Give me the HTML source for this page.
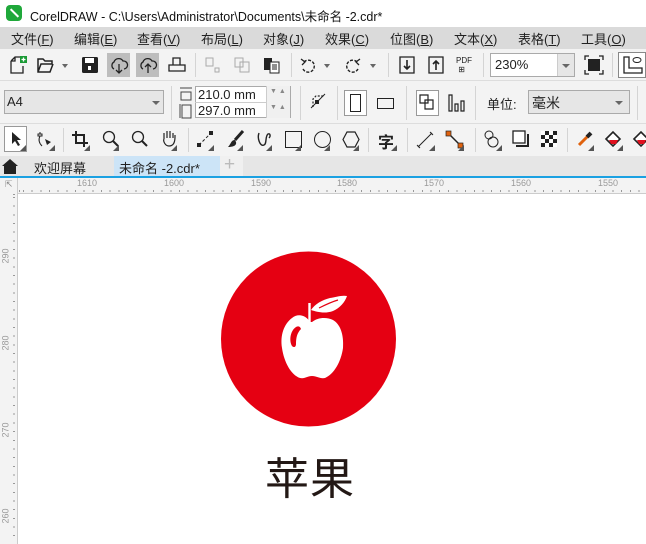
<!DOCTYPE html>
<html><head><meta charset="utf-8"><style>
*{margin:0;padding:0;box-sizing:border-box}
body{width:646px;height:544px;overflow:hidden;background:#fff;font-family:"Liberation Sans","Noto Sans CJK SC",sans-serif;position:relative;font-size:12px;color:#222}
.a{position:absolute}
.t{position:absolute;white-space:nowrap}
svg{position:absolute;overflow:visible}
.sep{position:absolute;width:1px;background:#d4d4d4}
.tri{position:absolute;width:0;height:0;border-left:3px solid transparent;border-top:3px solid transparent;border-right:3px solid #555;border-bottom:3px solid #555}
.rl{position:absolute;left:-2px;font-size:9px;color:#999;transform:rotate(-90deg);white-space:nowrap}
</style></head><body>
<div class="a" style="left:0;top:0;width:646px;height:27px;background:#fff"></div>
<div class="a" style="left:6px;top:5px;width:16px;height:16px;border-radius:4px;background:#1fa83a"></div>
<div class="a" style="left:9px;top:12px;width:11px;height:2px;background:#fff;transform:rotate(45deg)"></div>
<div class="t" style="left:30px;top:6px;font-size:12.5px;color:#111">CorelDRAW - C:\Users\Administrator\Documents\未命名 -2.cdr*</div>
<div class="a" style="left:0;top:27px;width:646px;height:22px;background:#dadada"></div>
<div class="t" style="left:11px;top:29px;font-size:13px">文件(<u>F</u>)</div>
<div class="t" style="left:74px;top:29px;font-size:13px">编辑(<u>E</u>)</div>
<div class="t" style="left:137px;top:29px;font-size:13px">查看(<u>V</u>)</div>
<div class="t" style="left:201px;top:29px;font-size:13px">布局(<u>L</u>)</div>
<div class="t" style="left:263px;top:29px;font-size:13px">对象(<u>J</u>)</div>
<div class="t" style="left:325px;top:29px;font-size:13px">效果(<u>C</u>)</div>
<div class="t" style="left:390px;top:29px;font-size:13px">位图(<u>B</u>)</div>
<div class="t" style="left:454px;top:29px;font-size:13px">文本(<u>X</u>)</div>
<div class="t" style="left:518px;top:29px;font-size:13px">表格(<u>T</u>)</div>
<div class="t" style="left:581px;top:29px;font-size:13px">工具(<u>O</u>)</div>
<div class="a" style="left:0;top:49px;width:646px;height:32px;background:#f3f3f3;border-bottom:1px solid #ddd"></div>
<svg style="left:8px;top:56px" width="18" height="18"><path d="M3 5 L7 1 H12 M3 5 V17 H15 V10 M3 5 H7 V1" fill="none" stroke="#222" stroke-width="1.3"/><rect x="12" y="0" width="7" height="7" fill="#1a9a35"/><path d="M15.5 1.5v4M13.5 3.5h4" stroke="#fff" stroke-width="1.3"/></svg>
<svg style="left:37px;top:58px" width="18" height="15"><path d="M1 1H6L8 3H15V6H4L1 14Z M1 1V14H13L16 6" fill="none" stroke="#222" stroke-width="1.5"/></svg>
<div class="a" style="left:62px;top:64px;border-left:3px solid transparent;border-right:3px solid transparent;border-top:4px solid #666"></div>
<svg style="left:82px;top:57px" width="16" height="16"><rect x="0" y="0" width="16" height="16" rx="1.5" fill="#222"/><rect x="3" y="1" width="9" height="5" fill="#fff"/><rect x="6" y="9" width="3" height="4" fill="#fff"/></svg>
<div class="a" style="left:107px;top:53px;width:23px;height:24px;background:#bdbdbd"></div>
<div class="a" style="left:136px;top:53px;width:23px;height:24px;background:#bdbdbd"></div>
<svg style="left:110px;top:57px" width="18" height="18"><path d="M4 12 A4 4 0 0 1 4 5 A5 5 0 0 1 13 4 A4 4 0 0 1 14 12 M9 7 V16 M6 13 L9 16 L12 13" fill="none" stroke="#222" stroke-width="1.3"/></svg>
<svg style="left:139px;top:57px" width="18" height="18"><path d="M4 12 A4 4 0 0 1 4 5 A5 5 0 0 1 13 4 A4 4 0 0 1 14 12 M9 16 V7 M6 10 L9 7 L12 10" fill="none" stroke="#222" stroke-width="1.3"/></svg>
<svg style="left:168px;top:57px" width="18" height="16"><path d="M5 8 V1 H12 V8 M1 8 H17 V14 H1 Z" fill="none" stroke="#222" stroke-width="1.3"/></svg>
<div class="sep" style="left:195px;top:53px;height:24px"></div>
<svg style="left:205px;top:57px" width="16" height="16"><path d="M1 1H8V9H1Z M10 11H14V15H10Z" fill="none" stroke="#aaa"/></svg>
<svg style="left:234px;top:57px" width="18" height="16"><path d="M1 1H9V10H1Z M6 5H15V15H6Z" fill="#f3f3f3" stroke="#aaa"/></svg>
<svg style="left:263px;top:56px" width="18" height="18"><rect x="1" y="2" width="8" height="12" fill="#222"/><rect x="7" y="6" width="9" height="11" fill="#fff" stroke="#222"/><path d="M9 9h5M9 11h5M9 13h5" stroke="#222"/></svg>
<div class="sep" style="left:291px;top:53px;height:24px"></div>
<svg style="left:300px;top:58px" width="16" height="16"><path d="M4 4 A6 6 0 1 1 3 11" fill="none" stroke="#222" stroke-width="1.4" stroke-dasharray="3 1.5"/><path d="M1 1 L5 4 L2 7" fill="none" stroke="#222" stroke-width="1.3"/></svg>
<div class="a" style="left:324px;top:64px;border-left:3px solid transparent;border-right:3px solid transparent;border-top:4px solid #666"></div>
<svg style="left:345px;top:58px" width="16" height="16"><path d="M12 4 A6 6 0 1 0 13 11" fill="none" stroke="#222" stroke-width="1.4" stroke-dasharray="3 1.5"/><path d="M15 1 L11 4 L14 7" fill="none" stroke="#222" stroke-width="1.3"/></svg>
<div class="a" style="left:370px;top:64px;border-left:3px solid transparent;border-right:3px solid transparent;border-top:4px solid #666"></div>
<div class="sep" style="left:388px;top:53px;height:24px"></div>
<svg style="left:399px;top:56px" width="16" height="18"><path d="M1 1H15V17H1Z" fill="none" stroke="#222" stroke-width="1.3"/><path d="M8 4V13M5 10L8 13L11 10" fill="none" stroke="#222" stroke-width="1.6"/></svg>
<svg style="left:428px;top:56px" width="16" height="18"><path d="M1 1H15V17H1Z" fill="none" stroke="#222" stroke-width="1.3"/><path d="M8 14V5M5 8L8 5L11 8" fill="none" stroke="#222" stroke-width="1.6"/></svg>
<div class="t" style="left:456px;top:56px;font-size:8px;line-height:9px">PDF<br>&nbsp;⊞</div>
<div class="sep" style="left:483px;top:53px;height:24px"></div>
<div class="a" style="left:490px;top:53px;width:85px;height:24px;border:1px solid #aaa;background:#fff"></div>
<div class="a" style="left:557px;top:54px;width:17px;height:22px;background:#e6e6e6;border-left:1px solid #ccc"></div>
<div class="a" style="left:562px;top:64px;border-left:4px solid transparent;border-right:4px solid transparent;border-top:4px solid #666"></div>
<div class="t" style="left:495px;top:57px;font-size:13px">230%</div>
<svg style="left:585px;top:56px" width="18" height="18"><rect x="3" y="3" width="12" height="12" fill="#222"/><path d="M0 4V0H4M14 0H18V4M18 14V18H14M4 18H0V14" fill="none" stroke="#222" stroke-width="1.3"/></svg>
<div class="sep" style="left:612px;top:53px;height:24px"></div>
<div class="a" style="left:618px;top:52px;width:28px;height:26px;border:1px solid #888;background:#fff"></div>
<svg style="left:623px;top:56px" width="20" height="18"><path d="M1 1V17H19V12H6V1Z" fill="none" stroke="#222" stroke-width="1.3"/><ellipse cx="14" cy="4" rx="4" ry="2.5" fill="none" stroke="#222"/></svg>
<div class="a" style="left:0;top:81px;width:646px;height:43px;background:#f3f3f3;border-bottom:1px solid #ddd"></div>
<div class="a" style="left:4px;top:90px;width:160px;height:24px;border:1px solid #aaa;background:#e6e6e6"></div>
<div class="t" style="left:7px;top:94px;font-size:13px">A4</div>
<div class="a" style="left:152px;top:101px;border-left:4px solid transparent;border-right:4px solid transparent;border-top:4px solid #666"></div>
<div class="sep" style="left:171px;top:86px;height:34px"></div>
<svg style="left:179px;top:87px" width="14" height="32"><path d="M1 1H13M2 5H12V13H2Z M3 18H12V31H3Z M1 17V31" fill="none" stroke="#444"/></svg>
<div class="a" style="left:195px;top:86px;width:96px;height:32px;border:1px solid #aaa;background:#fff"></div>
<div class="a" style="left:195px;top:102px;width:96px;height:1px;background:#ccc"></div>
<div class="a" style="left:266px;top:86px;width:25px;height:32px;background:#f0f0f0;border-left:1px solid #ccc;border-right:1px solid #aaa"></div>
<div class="t" style="left:198px;top:87px;font-size:13px">210.0 mm</div>
<div class="t" style="left:198px;top:103px;font-size:13px">297.0 mm</div>
<div class="t" style="left:270px;top:88px;font-size:7px;color:#888">▼ ▲</div>
<div class="t" style="left:270px;top:104px;font-size:7px;color:#888">▼ ▲</div>
<div class="sep" style="left:300px;top:86px;height:34px"></div>
<svg style="left:310px;top:93px" width="16" height="16"><path d="M3 14V6L6 3H14" fill="none" stroke="#222" stroke-width="1.2" stroke-dasharray="2 1.5"/><rect x="5" y="7" width="4" height="4" fill="#222"/><path d="M1 15L15 1" stroke="#222"/></svg>
<div class="sep" style="left:337px;top:86px;height:34px"></div>
<div class="a" style="left:344px;top:90px;width:23px;height:26px;border:1px solid #999;background:#fff"></div>
<div class="a" style="left:350px;top:94px;width:11px;height:18px;border:1.3px solid #222"></div>
<div class="a" style="left:377px;top:98px;width:17px;height:11px;border:1.3px solid #222"></div>
<div class="sep" style="left:406px;top:86px;height:34px"></div>
<div class="a" style="left:416px;top:90px;width:23px;height:26px;border:1px solid #999;background:#fff"></div>
<svg style="left:419px;top:94px" width="16" height="18"><path d="M1 1H9V9H1Z M6 6H14V15H6Z" fill="none" stroke="#222" stroke-width="1.2"/></svg>
<svg style="left:448px;top:94px" width="18" height="18"><path d="M1 1H4V17H1Z M7 10H10V17H7Z M13 7H16V17H13Z" fill="none" stroke="#222" stroke-width="1.2"/></svg>
<div class="sep" style="left:475px;top:86px;height:34px"></div>
<div class="t" style="left:487px;top:94px;font-size:13px">单位:</div>
<div class="a" style="left:528px;top:90px;width:102px;height:24px;border:1px solid #aaa;background:#e6e6e6"></div>
<div class="t" style="left:532px;top:93px;font-size:14px">毫米</div>
<div class="a" style="left:615px;top:101px;border-left:4px solid transparent;border-right:4px solid transparent;border-top:4px solid #666"></div>
<div class="sep" style="left:637px;top:86px;height:34px"></div>
<div class="a" style="left:0;top:124px;width:646px;height:32px;background:#f3f3f3"></div>
<div class="a" style="left:4px;top:126px;width:23px;height:26px;border:1px solid #999;background:#fff"></div>
<svg style="left:11px;top:131px" width="10" height="15"><path d="M1 1V13L4 10L7 15L9 14L6 9H10Z" fill="#222"/></svg>
<svg style="left:37px;top:131px" width="16" height="16"><path d="M3 1V3M1 3H5V5H1Z M3 5C1 9 2 12 5 15" fill="none" stroke="#222"/><path d="M8 8L14 11L10 14Z" fill="#222"/></svg>
<div class="sep" style="left:63px;top:128px;height:24px"></div>
<svg style="left:72px;top:131px" width="16" height="16"><path d="M4 0V12H16 M0 4H12V16" fill="none" stroke="#222" stroke-width="2"/></svg>
<svg style="left:102px;top:130px" width="18" height="18"><circle cx="7" cy="7" r="5.5" fill="none" stroke="#222" stroke-width="1.3"/><path d="M11 11L16 16" stroke="#222" stroke-width="2"/></svg>
<svg style="left:131px;top:130px" width="18" height="18"><circle cx="7" cy="7" r="5.5" fill="none" stroke="#222" stroke-width="1.3"/><path d="M11 11L16 16" stroke="#222" stroke-width="2"/></svg>
<svg style="left:160px;top:129px" width="18" height="18"><path d="M4 10V4M7 9V2M10 9V2M13 9V4M4 10C3 12 5 17 9 17C13 17 15 14 15 8V6" fill="none" stroke="#222" stroke-width="1.2"/></svg>
<div class="sep" style="left:188px;top:128px;height:24px"></div>
<svg style="left:197px;top:131px" width="16" height="16"><path d="M2 14L14 2" stroke="#222" stroke-dasharray="3 2"/><rect x="0" y="12" width="4" height="4" fill="#222"/><rect x="12" y="0" width="4" height="4" fill="#222"/></svg>
<svg style="left:227px;top:130px" width="18" height="18"><path d="M16 1L8 10" stroke="#222" stroke-width="3"/><path d="M8 10C4 10 4 14 1 17C5 17 10 16 9 12Z" fill="#222"/></svg>
<svg style="left:256px;top:130px" width="16" height="18"><path d="M3 3C1 8 4 17 8 15C11 14 9 6 12 4C14 3 15 6 13 8" fill="none" stroke="#222" stroke-width="1.4"/></svg>
<div class="a" style="left:285px;top:131px;width:17px;height:17px;border:1.3px solid #222"></div>
<div class="a" style="left:314px;top:131px;width:17px;height:17px;border:1.3px solid #222;border-radius:50%"></div>
<svg style="left:342px;top:131px" width="18" height="17"><path d="M5 1H13L17 8.5L13 16H5L1 8.5Z" fill="none" stroke="#222" stroke-width="1.2"/></svg>
<div class="sep" style="left:368px;top:128px;height:24px"></div>
<div class="t" style="left:378px;top:129px;font-size:16px;font-weight:bold">字</div>
<div class="sep" style="left:407px;top:128px;height:24px"></div>
<svg style="left:417px;top:132px" width="16" height="16"><path d="M1 15L15 1" stroke="#222"/><path d="M0 13L3 16M13 0L16 3" stroke="#222"/></svg>
<svg style="left:446px;top:131px" width="18" height="18"><path d="M3 3L15 15" stroke="#222" stroke-width="1.5"/><rect x="0" y="0" width="5" height="5" fill="#e0620e" stroke="#222" stroke-width=".7"/><rect x="12" y="12" width="5" height="5" fill="#e0620e" stroke="#222" stroke-width=".7"/></svg>
<div class="sep" style="left:475px;top:128px;height:24px"></div>
<svg style="left:483px;top:130px" width="18" height="18"><circle cx="6" cy="5" r="4" fill="none" stroke="#222"/><circle cx="10" cy="12" r="5" fill="none" stroke="#222"/></svg>
<svg style="left:512px;top:130px" width="18" height="18"><rect x="1" y="1" width="12" height="12" fill="#fff" stroke="#222" stroke-width="1.3"/><path d="M4 16H16V4" fill="none" stroke="#222" stroke-width="2"/></svg>
<svg style="left:541px;top:131px" width="16" height="16"><rect width="16" height="16" fill="#222"/><path d="M0 0h4v4H0zM8 0h4v4H8zM4 4h4v4H4zM12 4h4v4h-4zM0 8h4v4H0zM8 8h4v4H8zM4 12h4v4H4zM12 12h4v4h-4z" fill="#fff"/></svg>
<div class="sep" style="left:567px;top:128px;height:24px"></div>
<svg style="left:576px;top:130px" width="18" height="18"><path d="M3 15L12 6" stroke="#e0620e" stroke-width="3"/><path d="M11 7L15 3" stroke="#222" stroke-width="4"/></svg>
<svg style="left:604px;top:130px" width="20" height="18"><path d="M2 9L9 2L16 9L9 16Z" fill="#fff" stroke="#222" stroke-width="1.6"/><path d="M5 10H14L12 14H7Z" fill="#e0101e"/></svg>
<svg style="left:632px;top:130px" width="20" height="18"><path d="M2 9L9 2L16 9L9 16Z" fill="#fff" stroke="#222" stroke-width="1.6"/><path d="M5 10H14L12 14H7Z" fill="#e0101e"/></svg>
<div class="tri" style="left:20px;top:145px"></div><div class="tri" style="left:49px;top:145px"></div><div class="tri" style="left:84px;top:145px"></div><div class="tri" style="left:113px;top:145px"></div><div class="tri" style="left:171px;top:145px"></div><div class="tri" style="left:208px;top:145px"></div><div class="tri" style="left:237px;top:145px"></div><div class="tri" style="left:266px;top:145px"></div><div class="tri" style="left:295px;top:145px"></div><div class="tri" style="left:324px;top:145px"></div><div class="tri" style="left:353px;top:145px"></div><div class="tri" style="left:391px;top:145px"></div><div class="tri" style="left:429px;top:145px"></div><div class="tri" style="left:458px;top:145px"></div><div class="tri" style="left:496px;top:145px"></div><div class="tri" style="left:588px;top:145px"></div><div class="tri" style="left:617px;top:145px"></div>
<div class="a" style="left:0;top:156px;width:646px;height:20px;background:#e6e6e6"></div>
<svg style="left:2px;top:158px" width="16" height="16"><path d="M0 8L8 1L16 8H14V16H2V8Z" fill="#222"/></svg>
<div class="a" style="left:20px;top:156px;width:94px;height:20px;background:#e6e6e6"></div>
<div class="t" style="left:34px;top:158px;font-size:13px">欢迎屏幕</div>
<div class="a" style="left:114px;top:156px;width:106px;height:20px;background:#cce4f7"></div>
<div class="t" style="left:119px;top:158px;font-size:13px">未命名 -2.cdr*</div>
<div class="a" style="left:220px;top:156px;width:23px;height:20px;background:#f0f0f0"></div>
<div class="t" style="left:224px;top:154px;font-size:19px;color:#bbb">+</div>
<div class="a" style="left:0;top:176px;width:646px;height:2px;background:#1ba1e2"></div>
<div class="a" style="left:0;top:178px;width:646px;height:16px;background:#f3f3f3;border-bottom:1px solid #ccc"></div>
<div class="a" style="left:0;top:178px;width:18px;height:366px;background:#f3f3f3;border-right:1px solid #ccc"></div>
<div class="t" style="left:5px;top:179px;font-size:9px;color:#888">⇱</div>
<div class="a" style="left:18px;top:190px;width:628px;height:2px;background:repeating-linear-gradient(90deg,#999 0 1px,transparent 1px 8.67px);background-position:5px 0"></div>
<div class="a" style="left:13px;top:194px;width:2px;height:350px;background:repeating-linear-gradient(180deg,#999 0 1px,transparent 1px 8.67px);background-position:0 3px"></div>
<div class="t" style="left:77px;top:178px;font-size:9px;color:#999">1610</div>
<div class="t" style="left:164px;top:178px;font-size:9px;color:#999">1600</div>
<div class="t" style="left:251px;top:178px;font-size:9px;color:#999">1590</div>
<div class="t" style="left:337px;top:178px;font-size:9px;color:#999">1580</div>
<div class="t" style="left:424px;top:178px;font-size:9px;color:#999">1570</div>
<div class="t" style="left:511px;top:178px;font-size:9px;color:#999">1560</div>
<div class="t" style="left:598px;top:178px;font-size:9px;color:#999">1550</div>
<div class="rl" style="top:251px">290</div>
<div class="rl" style="top:338px">280</div>
<div class="rl" style="top:425px">270</div>
<div class="rl" style="top:511px">260</div>
<svg style="left:0;top:0" width="646" height="544">
<circle cx="308.5" cy="339" r="87.5" fill="#e50012"/>
<path d="M310 322 C306 315 298 313 292 318 C284 324 280 335 282 348 C284 362 291 375 300 378 C305 379 307 376 312 376 C317 376 320 379 325 378 C334 374 341 362 343 348 C344 334 340 324 333 320 C327 317 318 317 312 322 Z" fill="#fff"/>
<path d="M296 327 C290 331 289 341 292 346 C294 348 296 347 296 344 C296 338 297 333 301 329 C300 326 298 326 296 327Z" fill="#e50012"/>
<path d="M309.5 322 V303" stroke="#fff" stroke-width="2.4"/>
<path d="M311 310 C315 304 322 300 330 298 C336 297 342 295 347 296 C345 302 340 308 333 311 C325 314 317 312 311 310Z" fill="#fff"/>
<path d="M319 308 C325 305 331 302 338 300" stroke="#e50012" stroke-width="1.2" fill="none"/>
</svg>
<div class="t" style="left:265px;top:443px;font-size:44px;color:#231815;letter-spacing:1px;font-family:'Noto Sans CJK SC',sans-serif;font-weight:400">苹果</div>
</body></html>
